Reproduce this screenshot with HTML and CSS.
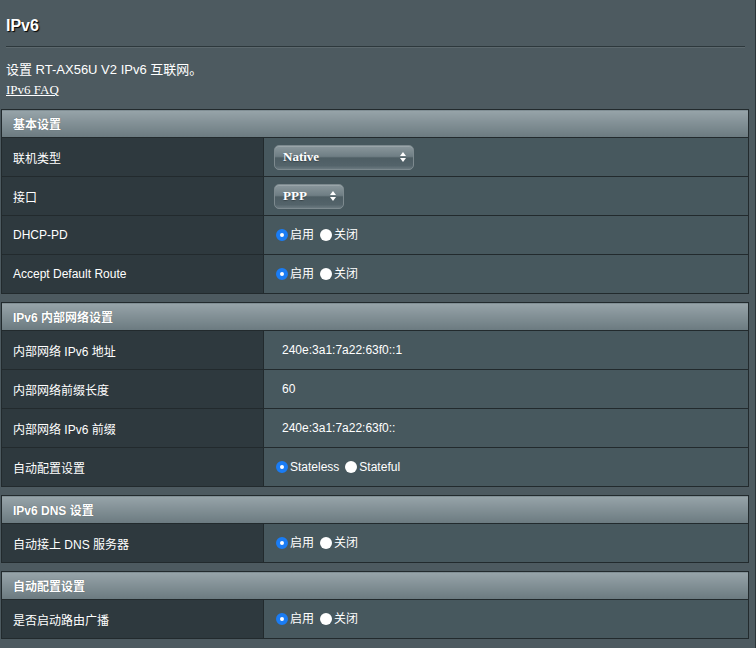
FILE: index.html
```html
<!DOCTYPE html>
<html lang="zh-CN">
<head>
<meta charset="utf-8">
<title>IPv6</title>
<link rel="stylesheet" href="styles.css">
</head>
<body>
<div class="page">
  <h1 class="title">IPv6</h1>
  <div class="rule"></div>
  <p class="desc">设置 RT-AX56U V2 IPv6 互联网。</p>
  <p class="faq"><a href="#">IPv6 FAQ</a></p>

  <table class="form">
    <colgroup><col class="c1"><col class="c2"></colgroup>
    <thead><tr><th colspan="2">基本设置</th></tr></thead>
    <tbody>
      <tr><td class="lbl">联机类型</td><td class="val">
        <span class="select wide"><span class="sel-text">Native</span><svg class="arrows" width="6" height="10" viewBox="0 0 6 10"><path d="M3 0L6 4H0Z M0 6H6L3 10Z" fill="#fff"/></svg></span>
      </td></tr>
      <tr><td class="lbl">接口</td><td class="val">
        <span class="select narrow"><span class="sel-text">PPP</span><svg class="arrows" width="6" height="10" viewBox="0 0 6 10"><path d="M3 0L6 4H0Z M0 6H6L3 10Z" fill="#fff"/></svg></span>
      </td></tr>
      <tr><td class="lbl">DHCP-PD</td><td class="val">
        <span class="radios"><span class="radio on"></span><span class="rtxt">启用</span><span class="radio"></span><span class="rtxt">关闭</span></span>
      </td></tr>
      <tr><td class="lbl">Accept Default Route</td><td class="val">
        <span class="radios"><span class="radio on"></span><span class="rtxt">启用</span><span class="radio"></span><span class="rtxt">关闭</span></span>
      </td></tr>
    </tbody>
  </table>

  <table class="form">
    <colgroup><col class="c1"><col class="c2"></colgroup>
    <thead><tr><th colspan="2">IPv6 内部网络设置</th></tr></thead>
    <tbody>
      <tr><td class="lbl">内部网络 IPv6 地址</td><td class="val"><span class="txt">240e:3a1:7a22:63f0::1</span></td></tr>
      <tr><td class="lbl">内部网络前缀长度</td><td class="val"><span class="txt">60</span></td></tr>
      <tr><td class="lbl">内部网络 IPv6 前缀</td><td class="val"><span class="txt">240e:3a1:7a22:63f0::</span></td></tr>
      <tr><td class="lbl">自动配置设置</td><td class="val">
        <span class="radios"><span class="radio on"></span><span class="rtxt">Stateless</span><span class="radio"></span><span class="rtxt">Stateful</span></span>
      </td></tr>
    </tbody>
  </table>

  <table class="form">
    <colgroup><col class="c1"><col class="c2"></colgroup>
    <thead><tr><th colspan="2">IPv6 DNS 设置</th></tr></thead>
    <tbody>
      <tr><td class="lbl">自动接上 DNS 服务器</td><td class="val">
        <span class="radios"><span class="radio on"></span><span class="rtxt">启用</span><span class="radio"></span><span class="rtxt">关闭</span></span>
      </td></tr>
    </tbody>
  </table>

  <table class="form">
    <colgroup><col class="c1"><col class="c2"></colgroup>
    <thead><tr><th colspan="2">自动配置设置</th></tr></thead>
    <tbody>
      <tr><td class="lbl">是否启动路由广播</td><td class="val">
        <span class="radios"><span class="radio on"></span><span class="rtxt">启用</span><span class="radio"></span><span class="rtxt">关闭</span></span>
      </td></tr>
    </tbody>
  </table>
</div>
</body>
</html>
```
FILE: styles.css
```css
html, body {
  margin: 0;
  padding: 0;
  background: #4d5a60;
}
body {
  font-family: "Liberation Sans", "Noto Sans CJK SC", sans-serif;
  color: #fff;
}
.page {
  box-sizing: border-box;
  width: 756px;
  min-height: 648px;
  border-right: 1px solid #2c363a;
  padding-top: 17px;
}
.title {
  margin: 0 0 0 6px;
  font-size: 16px;
  line-height: 18px;
  font-weight: bold;
  text-shadow: 1px 1px 1px #000;
}
.rule {
  margin: 11px 10px 0 6px;
  height: 0;
  border-top: 1px solid #2d383c;
  border-bottom: 1px solid #5c686d;
}
.desc {
  margin: 14px 0 0 6px;
  font-size: 13px;
  line-height: 16px;
}
.faq {
  margin: 4px 0 0 6px;
  font-family: "Liberation Serif", serif;
  font-size: 13px;
  line-height: 16px;
}
.faq a {
  color: #fff;
  text-decoration: underline;
}
.form {
  width: 748px;
  margin: 11px 0 0 1px;
  border-collapse: collapse;
  table-layout: fixed;
}
.form + .form {
  margin-top: 8px;
}
.form col.c1 { width: 262px; }
.form col.c2 { width: auto; }
.form th, .form td {
  border: 1px solid #222a2d;
  padding: 0;
}
.form th {
  height: 27px;
  text-align: left;
  padding-left: 11px;
  font-size: 12px;
  font-weight: bold;
  background: linear-gradient(#97a4a9, #6b7a80);
  text-shadow: 0 0 1px rgba(0,0,0,0.35);
}
.form td {
  height: 38px;
  font-size: 12px;
}
.form td.lbl {
  padding-left: 11px;
  background: #2e393e;
}
.form td.val {
  background: #47585e;
  padding-left: 10px;
}
.txt {
  margin-left: 8px;
}
.select {
  box-sizing: border-box;
  display: inline-flex;
  align-items: center;
  justify-content: space-between;
  height: 25px;
  vertical-align: middle;
  border: 1px solid #7d8a8f;
  border-radius: 5px;
  padding: 0 7px 0 8px;
  background: linear-gradient(#8a979c 0%, #6f7e84 45%, #4e5e64 52%, #53636a 85%, #6a797f 100%);
  box-shadow: inset 0 1px 0 rgba(255,255,255,0.15);
  font-family: "Liberation Serif", serif;
  font-size: 13px;
  font-weight: bold;
  text-shadow: 0 1px 1px rgba(0,0,0,0.3);
}
.select.wide { width: 140px; }
.select.narrow { width: 70px; }
.arrows {
  display: block;
}
.radios {
  display: inline-flex;
  align-items: center;
  margin-left: 2px;
}
.radio {
  box-sizing: border-box;
  width: 12px;
  height: 12px;
  border-radius: 50%;
  background: #fff;
  margin-right: 2px;
}
.radio.on {
  border: 4px solid #1a7cf4;
  background-color: #fff;
}
.rtxt {
  line-height: 16px;
}
.rtxt + .radio {
  margin-left: 6px;
}
```
